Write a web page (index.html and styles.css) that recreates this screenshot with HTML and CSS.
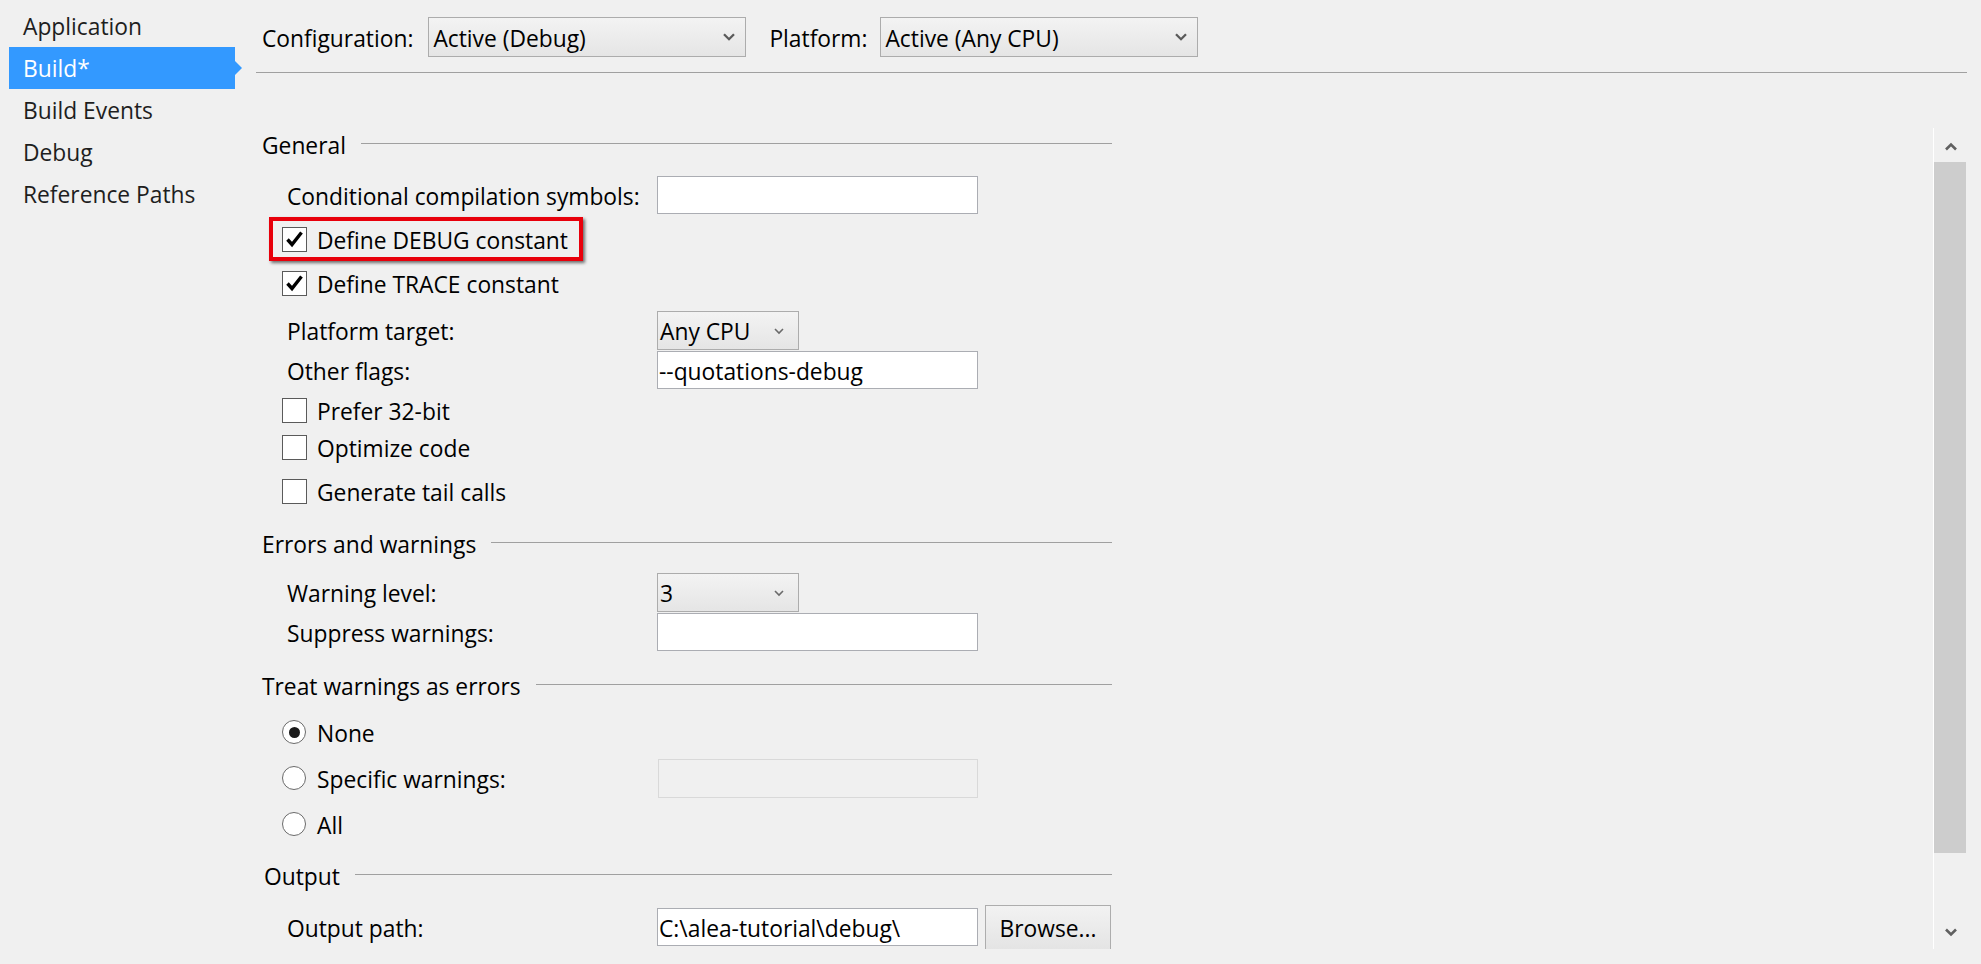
FILE: index.html
```html
<!DOCTYPE html>
<html lang="en">
<head>
<meta charset="utf-8">
<title>Build</title>
<link rel="stylesheet" href="styles.css">
</head>
<body>
<div class="app">
  <nav class="nav">
    <div class="nav-item">Application</div>
    <div class="nav-item is-active">Build*</div>
    <div class="nav-item">Build Events</div>
    <div class="nav-item">Debug</div>
    <div class="nav-item">Reference Paths</div>
  </nav>

  <main class="main">
    <header class="toolbar">
      <span class="tb-label">Configuration:</span>
      <div class="combo combo-wide">
        <span class="combo-text">Active (Debug)</span>
        <svg class="chev-big" width="12" height="8" viewBox="0 0 12 8"><polyline points="1,1.2 6,6.2 11,1.2" fill="none" stroke="#5a5a5a" stroke-width="2.3"/></svg>
      </div>
      <span class="tb-label tb-label-2">Platform:</span>
      <div class="combo combo-wide">
        <span class="combo-text">Active (Any CPU)</span>
        <svg class="chev-big" width="12" height="8" viewBox="0 0 12 8"><polyline points="1,1.2 6,6.2 11,1.2" fill="none" stroke="#5a5a5a" stroke-width="2.3"/></svg>
      </div>
    </header>
    <div class="sep"></div>

    <div class="scroll">
      <div class="content">
        <div class="heading">General</div>

        <div class="row field m18">
          <span class="label">Conditional compilation symbols:</span>
          <div class="textbox"></div>
        </div>

        <div class="row check m8">
          <span class="box"><svg width="25" height="25" viewBox="0 0 25 25"><path d="M5.5 12.5 L10 17.5 L19.5 5.5" fill="none" stroke="#000" stroke-width="3.4"/></svg></span>
          <span class="opt">Define DEBUG constant</span>
          <span class="highlight"></span>
        </div>

        <div class="row check m8">
          <span class="box"><svg width="25" height="25" viewBox="0 0 25 25"><path d="M5.5 12.5 L10 17.5 L19.5 5.5" fill="none" stroke="#000" stroke-width="3.4"/></svg></span>
          <span class="opt">Define TRACE constant</span>
        </div>

        <div class="row field m11">
          <span class="label">Platform target:</span>
          <div class="combo combo-small">
            <span class="combo-text">Any CPU</span>
            <svg class="chev-small" width="10" height="7" viewBox="0 0 10 7"><polyline points="1,1 5,5 9,1" fill="none" stroke="#6a6a6a" stroke-width="1.6"/></svg>
          </div>
        </div>

        <div class="row field m4">
          <span class="label">Other flags:</span>
          <div class="textbox"><span class="tb-value">--quotations-debug</span></div>
        </div>

        <div class="row check m4">
          <span class="box"></span>
          <span class="opt">Prefer 32-bit</span>
        </div>

        <div class="row check m1">
          <span class="box"></span>
          <span class="opt">Optimize code</span>
        </div>

        <div class="row check m8">
          <span class="box"></span>
          <span class="opt">Generate tail calls</span>
        </div>

        <div class="heading m19">Errors and warnings</div>

        <div class="row field m16">
          <span class="label">Warning level:</span>
          <div class="combo combo-small">
            <span class="combo-text">3</span>
            <svg class="chev-small" width="10" height="7" viewBox="0 0 10 7"><polyline points="1,1 5,5 9,1" fill="none" stroke="#6a6a6a" stroke-width="1.6"/></svg>
          </div>
        </div>

        <div class="row field m4">
          <span class="label">Suppress warnings:</span>
          <div class="textbox"></div>
        </div>

        <div class="heading m20">Treat warnings as errors</div>

        <div class="row check m14">
          <span class="radio is-on"></span>
          <span class="opt">None</span>
        </div>

        <div class="row check m10">
          <span class="radio-group">
            <span class="radio"></span>
            <span class="opt">Specific warnings:</span>
          </span>
          <div class="textbox is-disabled"></div>
        </div>

        <div class="row check m10">
          <span class="radio"></span>
          <span class="opt">All</span>
        </div>

        <div class="heading heading-out m18">Output</div>

        <div class="row field m19">
          <span class="label">Output path:</span>
          <div class="textbox"><span class="tb-value">C:\alea-tutorial\debug\</span></div>
          <div class="button"><span class="btn-text">Browse...</span></div>
        </div>
      </div>

      <div class="scrollbar">
        <div class="sb-btn">
          <svg width="12" height="9" viewBox="0 0 12 9"><polyline points="1,7.5 6,2.5 11,7.5" fill="none" stroke="#606060" stroke-width="2.6"/></svg>
        </div>
        <div class="sb-track"><div class="sb-thumb"></div></div>
        <div class="sb-btn sb-btn-down">
          <svg width="12" height="9" viewBox="0 0 12 9"><polyline points="1,1.5 6,6.5 11,1.5" fill="none" stroke="#606060" stroke-width="2.6"/></svg>
        </div>
      </div>
    </div>
  </main>
</div>
</body>
</html>
```
FILE: styles.css
```css
* { box-sizing: border-box; }

html, body {
  margin: 0;
  padding: 0;
  background: #f0f0f0;
}

body {
  font-family: "Open Sans", "Noto Sans", sans-serif;
  font-size: 22.8px;
  line-height: 28px;
  color: #000;
  overflow: hidden;
}

.app {
  display: grid;
  grid-template-columns: 256px 1fr;
  width: 1981px;
  height: 964px;
  padding-right: 14px;
}

/* ---------- left navigation ---------- */
.nav {
  padding-top: 5px;
}

.nav-item {
  position: relative;
  margin-left: 9px;
  width: 226px;
  height: 42px;
  line-height: 40px;
  padding-top: 2px;
  padding-left: 14px;
  color: #1e1e1e;
  white-space: nowrap;
}

.nav-item.is-active {
  background: #3399ff;
  color: #fff;
}

.nav-item.is-active::after {
  content: "";
  position: absolute;
  right: -7px;
  top: 14px;
  border-left: 7px solid #3399ff;
  border-top: 7px solid transparent;
  border-bottom: 7px solid transparent;
}

/* ---------- main ---------- */
.main {
  display: flex;
  flex-direction: column;
  min-width: 0;
}

.toolbar {
  display: flex;
  align-items: center;
  margin-top: 17px;
  height: 40px;
  padding-left: 6px;
}

/* text baseline nudge: text sits ~2px lower than box centre */
.tb-label,
.combo-text,
.label,
.opt,
.tb-value,
.btn-text {
  padding-top: 4px;
}

.tb-label {
  white-space: nowrap;
  margin-right: 15px;
}

.tb-label-2 {
  margin-left: 23px;
  margin-right: 13px;
}

.combo {
  display: flex;
  align-items: center;
  border: 1px solid #acacac;
  background: linear-gradient(#f3f3f3, #e5e5e5);
  padding-left: 4px;
  white-space: nowrap;
}

.combo-wide {
  width: 318px;
  height: 40px;
}

.combo-small {
  width: 142px;
  height: 39px;
  padding-left: 2px;
}

.combo-text {
  flex: 1;
}

.chev-big {
  margin-right: 10px;
}

.chev-small {
  margin-right: 14px;
  margin-top: 2px;
}

.sep {
  margin-top: 15px;
  height: 1px;
  background: #a0a0a0;
}

.scroll {
  margin-top: 55px;
  height: 821px;
  display: flex;
}

.content {
  flex: 1;
  min-width: 0;
  overflow: hidden;
  padding-top: 1px;
  padding-left: 6px;
}

/* ---------- section headings ---------- */
.heading {
  display: flex;
  align-items: center;
  width: 850px;
  height: 30px;
  padding-top: 4px;
  white-space: nowrap;
}

.heading::after {
  content: "";
  flex: 1;
  height: 1px;
  margin-left: 15px;
  margin-top: -6px;
  background: #a0a0a0;
}

.heading-out {
  padding-left: 2px;
}

/* ---------- rows ---------- */
.row {
  position: relative;
  display: flex;
  align-items: center;
  height: 36px;
  white-space: nowrap;
}

.row.field { padding-left: 25px; }
.row.check { padding-left: 20px; }

.m1 { margin-top: 1px; }
.m4 { margin-top: 4px; }
.m8 { margin-top: 8px; }
.m10 { margin-top: 10px; }
.m11 { margin-top: 11px; }
.m14 { margin-top: 14px; }
.m16 { margin-top: 16px; }
.m18 { margin-top: 18px; }
.m19 { margin-top: 19px; }
.m20 { margin-top: 20px; }

.label {
  width: 370px;
  flex: none;
}

.textbox {
  flex: none;
  width: 321px;
  height: 38px;
  background: #fff;
  border: 1px solid #abadb3;
  display: flex;
  align-items: center;
  padding-left: 1px;
}

.textbox.is-disabled {
  background: #f0f0f0;
  border-color: #d9d9d9;
  width: 320px;
  height: 39px;
}

.box {
  flex: none;
  width: 25px;
  height: 25px;
  background: #fff;
  border: 1px solid #5a5a5a;
  display: flex;
}

.box svg {
  margin: -1px;
}

.opt {
  margin-left: 10px;
}

.radio-group {
  display: flex;
  align-items: center;
  width: 376px;
  flex: none;
}

.radio {
  flex: none;
  width: 24px;
  height: 24px;
  border-radius: 50%;
  border: 1px solid #6a6a6a;
  background: #fff;
  display: flex;
  align-items: center;
  justify-content: center;
}

.radio.is-on::after {
  content: "";
  width: 11px;
  height: 11px;
  border-radius: 50%;
  background: #1a1a1a;
}

.radio + .opt {
  margin-left: 11px;
}

.button {
  flex: none;
  margin-left: 7px;
  width: 126px;
  height: 45px;
  border: 1px solid #adadad;
  background: linear-gradient(#f2f2f2, #e4e4e4);
  display: flex;
  align-items: center;
  justify-content: center;
}

/* ---------- annotation ---------- */
.highlight {
  position: absolute;
  left: 7px;
  top: -4px;
  width: 314px;
  height: 44px;
  border: 4px solid #e8000b;
  box-shadow: 2px 2px 3px rgba(0, 0, 0, 0.55);
  pointer-events: none;
}

/* ---------- scrollbar ---------- */
.scrollbar {
  flex: none;
  width: 34px;
  border-left: 1px solid #fff;
  display: flex;
  flex-direction: column;
}

.sb-btn {
  height: 34px;
  display: flex;
  align-items: center;
  justify-content: center;
  padding-top: 2px;
}

.sb-btn-down {
  padding-top: 0;
}

.sb-track {
  flex: 1;
}

.sb-thumb {
  width: 32px;
  height: 691px;
  background: #cdcdcd;
}
```
